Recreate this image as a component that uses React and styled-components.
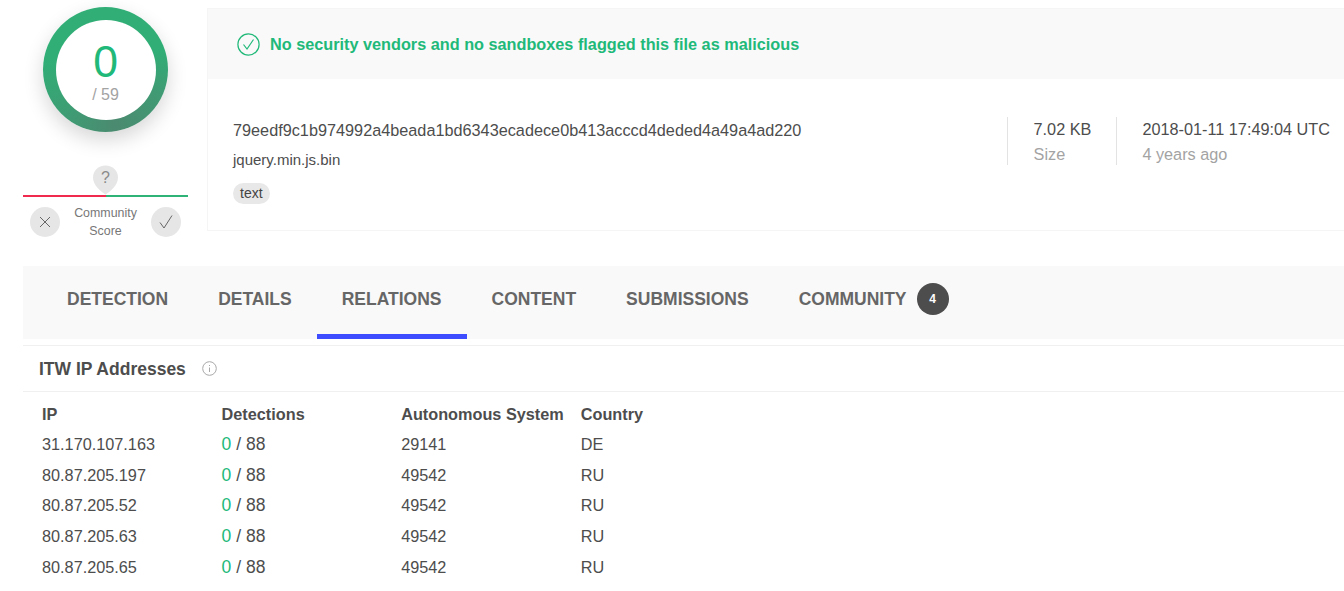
import React from "react";
import styled, { createGlobalStyle } from "styled-components";

const Global = createGlobalStyle`
  html, body { margin: 0; padding: 0; background: #fff; height: 591px; overflow: hidden; }
  body { font-family: "Liberation Sans", Arial, sans-serif; color: #4d4d4d; }
`;

const Page = styled.div`
  width: 1344px;
  height: 591px;
  overflow: hidden;
  box-sizing: border-box;
  padding-left: 23px;
`;
const TopRow = styled.div`
  display: flex;
  gap: 19px;
  height: 266px;
  align-items: flex-start;
`;
const ScoreColumn = styled.div`
  width: 165px;
  flex: none;
  padding-top: 7px;
  display: flex;
  flex-direction: column;
  align-items: center;
`;
const Ring = styled.div`
  width: 125px;
  height: 125px;
  border-radius: 50%;
  background: conic-gradient(#30ae76 0deg, #30ae76 70deg, #3f9c74 110deg, #4b8a70 170deg, #3d9e74 225deg, #30ae76 280deg, #30ae76 360deg);
  box-shadow: 0 8px 20px rgba(0, 0, 0, 0.16);
  display: flex;
  align-items: center;
  justify-content: center;
`;
const RingInner = styled.div`
  width: 100px;
  height: 100px;
  border-radius: 50%;
  background: #fff;
  display: flex;
  flex-direction: column;
  align-items: center;
`;
const Score = styled.div`
  font-size: 44.5px;
  line-height: 48px;
  margin-top: 18px;
  color: #21b979;
`;
const Total = styled.div`
  font-size: 16px;
  line-height: 18px;
  color: #a3a3a3;
`;
const Pin = styled.div`
  position: relative;
  width: 27px;
  height: 30px;
  margin-top: 33px;
  display: flex;
  justify-content: center;
  font-size: 16px;
  line-height: 26px;
  color: #8a8a8a;
  svg { position: absolute; left: 0; top: 0; }
  span { position: relative; }
`;
const ScoreBar = styled.div`
  width: 165px;
  height: 2px;
  flex: none;
  background: linear-gradient(to right, #f0294f 0 50%, #2fb377 50% 100%);
`;
const VoteRow = styled.div`
  width: 165px;
  box-sizing: border-box;
  padding: 7px 7px 0;
  display: flex;
  justify-content: space-between;
  align-items: center;
`;
const VoteButton = styled.div`
  width: 30px;
  height: 30px;
  border-radius: 50%;
  background: #e6e6e6;
  display: flex;
  align-items: center;
  justify-content: center;
  color: #666;
`;
const VoteLabel = styled.div`
  font-size: 12.4px;
  line-height: 18px;
  text-align: center;
  color: #777;
`;
const Panel = styled.div`
  flex: 1;
  margin-top: 8px;
  height: 223px;
  box-sizing: border-box;
  border: 1px solid #f5f5f5;
  border-right: 0;
`;
const Verdict = styled.div`
  height: 70px;
  box-sizing: border-box;
  padding-top: 1px;
  background: #f9f9f9;
  display: flex;
  align-items: center;
  gap: 10px;
  padding-left: 29px;
  font-size: 16.25px;
  font-weight: 700;
  color: #21b979;
`;
const FileInfo = styled.div`
  display: flex;
  align-items: flex-start;
  padding-top: 38px;
`;
const FileMain = styled.div`
  flex: 1;
  padding-left: 25px;
`;
const Hash = styled.div`
  font-size: 16.25px;
  line-height: 24px;
  margin-top: 1px;
  color: #4d4d4d;
`;
const FileName = styled.div`
  font-size: 15px;
  line-height: 20px;
  margin-top: 8px;
  color: #4d4d4d;
`;
const Tag = styled.span`
  display: inline-block;
  margin-top: 13px;
  padding: 0 7px;
  height: 21px;
  line-height: 21px;
  font-size: 14px;
  border-radius: 10.5px;
  background: #e8e8e8;
  color: #444;
`;
const Meta = styled.div`
  height: 48px;
  border-left: 1px solid #e3e3e3;
  padding: 0 ${(p) => p.$pr}px 0 ${(p) => p.$pl}px;
  white-space: nowrap;
`;
const MetaValue = styled.div`
  font-size: 16.25px;
  line-height: 24px;
  color: #4d4d4d;
`;
const MetaLabel = styled.div`
  font-size: 16.25px;
  line-height: 24px;
  margin-top: 1px;
  color: #a3a3a3;
`;
const Tabs = styled.div`
  height: 73px;
  background: #f9f9f9;
  display: flex;
  padding-left: 19px;
`;
const Tab = styled.div`
  box-sizing: border-box;
  height: 73px;
  padding: 5px 25px 7px;
  display: flex;
  align-items: center;
  gap: 10px;
  font-size: 17.5px;
  font-weight: 700;
  color: #666;
  border-bottom: 5px solid ${(p) => (p.$active ? "#3d4dff" : "transparent")};
`;
const Badge = styled.span`
  width: 32px;
  height: 32px;
  border-radius: 50%;
  background: #4d4d4d;
  color: #fff;
  font-size: 12px;
  font-weight: 700;
  display: flex;
  align-items: center;
  justify-content: center;
`;
const SectionHead = styled.div`
  margin-top: 6px;
  height: 45px;
  box-sizing: content-box;
  border-top: 1px solid #f0f0f0;
  border-bottom: 1px solid #f0f0f0;
  display: flex;
  align-items: center;
  gap: 16px;
  padding-left: 16px;
  font-size: 17.5px;
  font-weight: 700;
  color: #4d4d4d;
`;
const HeadText = styled.span`
  padding-top: 2px;
`;
const Table = styled.div`
  padding: 8px 0 0 19px;
  display: grid;
  grid-template-columns: repeat(4, 179.6px);
  grid-template-rows: 29.2px;
  grid-auto-rows: 30.7px;
  align-items: center;
  font-size: 16.25px;
  color: #4d4d4d;
`;
const HeadCell = styled.div`
  font-weight: 700;
  white-space: nowrap;
`;
const Ratio = styled.div`
  font-size: 17.5px;
`;
const Clean = styled.span`
  color: #21b979;
`;

const rows = [
  ["31.170.107.163", "29141", "DE"],
  ["80.87.205.197", "49542", "RU"],
  ["80.87.205.52", "49542", "RU"],
  ["80.87.205.63", "49542", "RU"],
  ["80.87.205.65", "49542", "RU"],
];

const tabs = ["DETECTION", "DETAILS", "RELATIONS", "CONTENT", "SUBMISSIONS", "COMMUNITY"];

export default function App() {
  return (
    <Page>
      <Global />
      <TopRow>
        <ScoreColumn>
          <Ring>
            <RingInner>
              <Score>0</Score>
              <Total>/ 59</Total>
            </RingInner>
          </Ring>
          <Pin>
            <svg width="27" height="30" viewBox="0 0 27 30">
              <path d="M13.5 0.5C20.7 0.5 26 5.8 26 12.5C26 20 19 26 13.5 29.5C8 26 1 20 1 12.5C1 5.8 6.3 0.5 13.5 0.5Z" fill="#e6e6e6" />
            </svg>
            <span>?</span>
          </Pin>
          <ScoreBar />
          <VoteRow>
            <VoteButton>
              <svg width="14" height="14" viewBox="0 0 14 14" fill="none" stroke="#666" strokeWidth="1">
                <path d="M2 2L12 12M12 2L2 12" />
              </svg>
            </VoteButton>
            <VoteLabel>
              Community
              <br />
              Score
            </VoteLabel>
            <VoteButton>
              <svg width="16" height="16" viewBox="0 0 16 16" fill="none" stroke="#666" strokeWidth="1">
                <path d="M2 8.5L6 14L14 1.5" />
              </svg>
            </VoteButton>
          </VoteRow>
        </ScoreColumn>
        <Panel>
          <Verdict>
            <svg width="23" height="23" viewBox="0 0 23 23" fill="none" stroke="#21b979" strokeWidth="1.2">
              <circle cx="11.5" cy="11.5" r="10.6" />
              <path d="M6.5 11.5L10 16L16.5 6.5" />
            </svg>
            No security vendors and no sandboxes flagged this file as malicious
          </Verdict>
          <FileInfo>
            <FileMain>
              <Hash>79eedf9c1b974992a4beada1bd6343ecadece0b413acccd4deded4a49a4ad220</Hash>
              <FileName>jquery.min.js.bin</FileName>
              <Tag>text</Tag>
            </FileMain>
            <Meta $pl={26} $pr={25}>
              <MetaValue>7.02 KB</MetaValue>
              <MetaLabel>Size</MetaLabel>
            </Meta>
            <Meta $pl={25} $pr={14}>
              <MetaValue>2018-01-11 17:49:04 UTC</MetaValue>
              <MetaLabel>4 years ago</MetaLabel>
            </Meta>
          </FileInfo>
        </Panel>
      </TopRow>
      <Tabs>
        {tabs.map((t) => (
          <Tab key={t} $active={t === "RELATIONS"}>
            {t}
            {t === "COMMUNITY" && <Badge>4</Badge>}
          </Tab>
        ))}
      </Tabs>
      <SectionHead>
        <HeadText>ITW IP Addresses</HeadText>
        <svg width="15" height="15" viewBox="0 0 15 15" fill="none" stroke="#a8a8a8" strokeWidth="1">
          <circle cx="7.5" cy="7.5" r="6.8" />
          <path d="M7.5 6.5V11M7.5 4V5" />
        </svg>
      </SectionHead>
      <Table>
        <HeadCell>IP</HeadCell>
        <HeadCell>Detections</HeadCell>
        <HeadCell>Autonomous System</HeadCell>
        <HeadCell>Country</HeadCell>
        {rows.map(([ip, as, country]) => (
          <React.Fragment key={ip}>
            <div>{ip}</div>
            <Ratio>
              <Clean>0</Clean> / 88
            </Ratio>
            <div>{as}</div>
            <div>{country}</div>
          </React.Fragment>
        ))}
      </Table>
    </Page>
  );
}
